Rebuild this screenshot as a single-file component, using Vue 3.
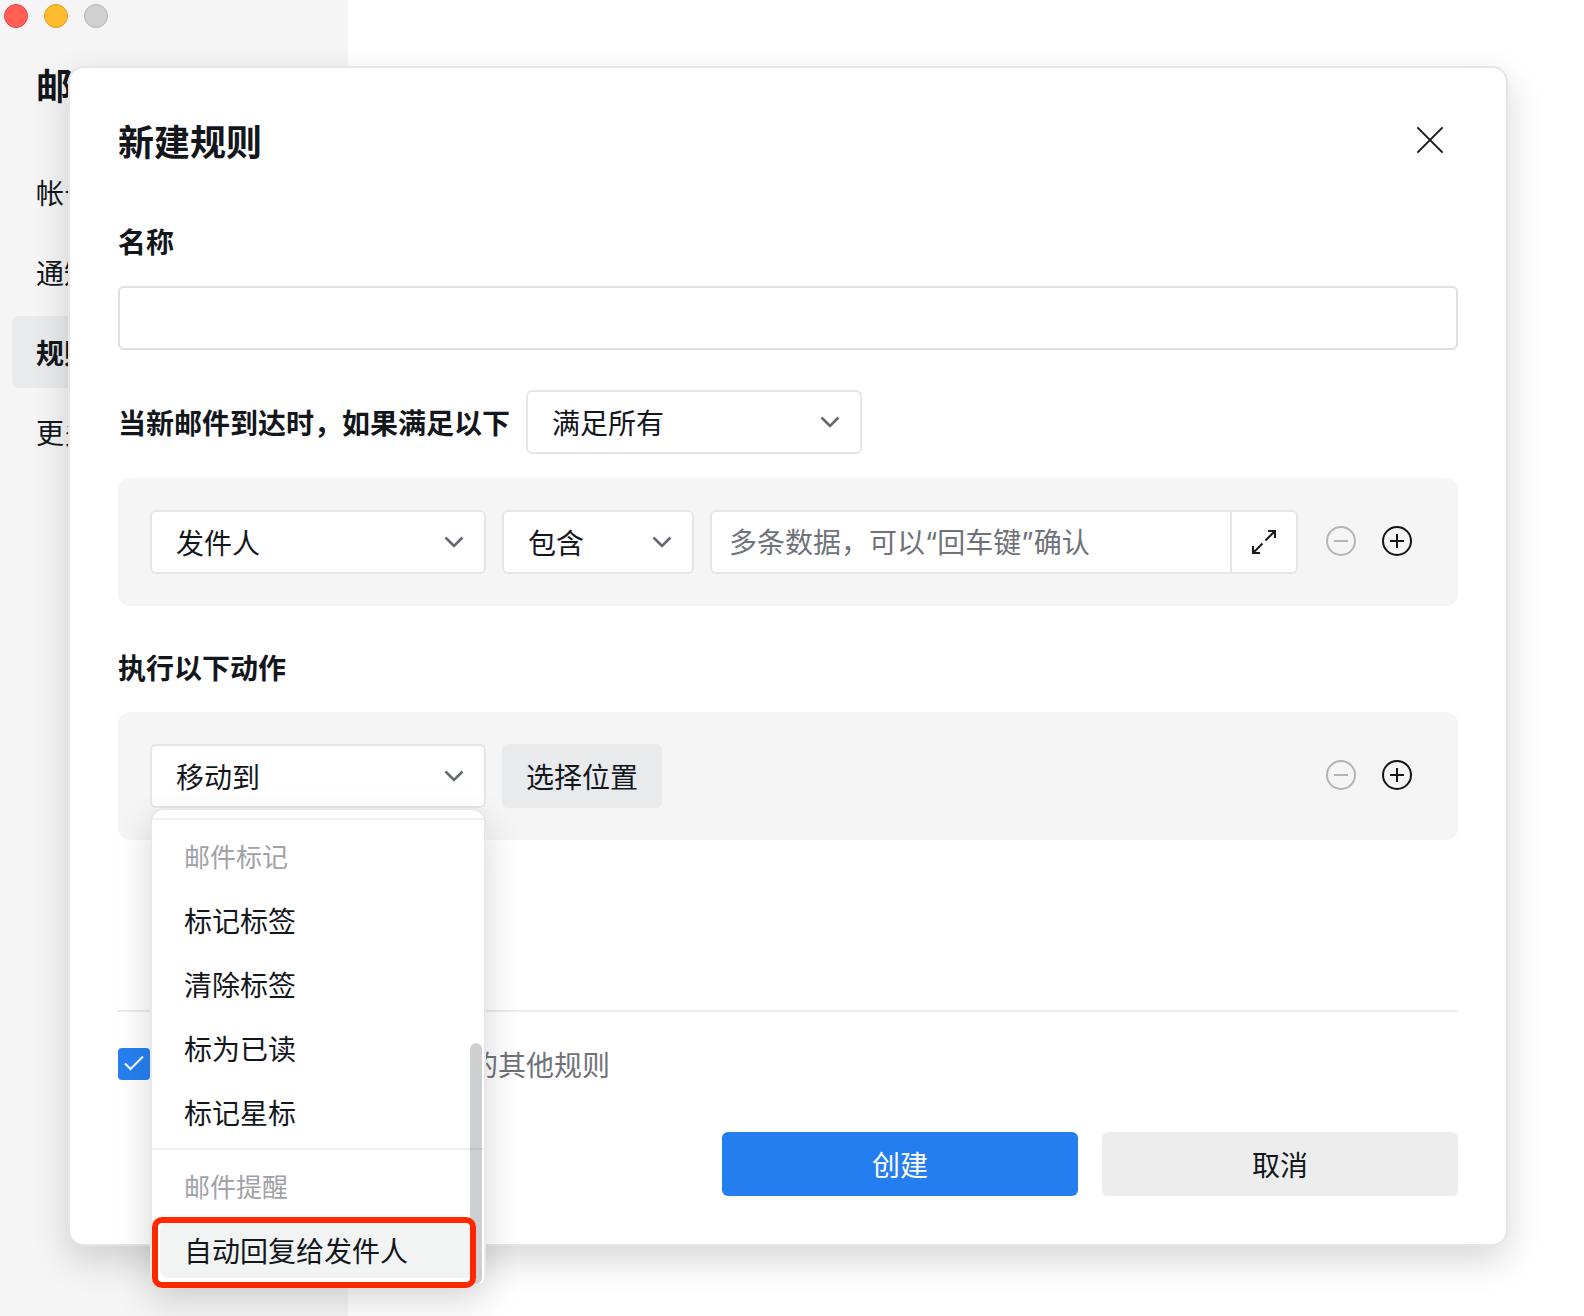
<script setup>
import { ref } from 'vue'

const navItems = ['帐号', '通知', '规则', '更多']
const activeNav = ref('规则')

const ruleName = ref('')
const matchMode = ref('满足所有')
const field = ref('发件人')
const operator = ref('包含')
const action = ref('移动到')
const stopOthers = ref(true)

const actionGroups = [
  { title: '邮件标记', items: ['标记标签', '清除标签', '标为已读', '标记星标'] },
  { title: '邮件提醒', items: ['自动回复给发件人'] },
]
const hovered = '自动回复给发件人'
</script>

<template>
  <div class="window">
    <aside class="sidebar">
      <div class="lights">
        <span class="light red"></span>
        <span class="light yellow"></span>
        <span class="light gray"></span>
      </div>
      <h1 class="side-title">邮箱设置</h1>
      <nav class="nav">
        <a
          v-for="item in navItems"
          :key="item"
          href="#"
          class="nav-item"
          :class="{ active: item === activeNav }"
          @click.prevent="activeNav = item"
        >{{ item }}</a>
      </nav>
    </aside>

    <section class="dialog" role="dialog" aria-labelledby="dialog-title">
      <header class="dialog-head">
        <h2 id="dialog-title" class="dialog-title">新建规则</h2>
        <button type="button" class="icon-btn close" aria-label="关闭">
          <svg width="30" height="30" viewBox="0 0 30 30" fill="none" stroke="#1a1a1a" stroke-width="2">
            <path d="M2.4 2.4 27.6 27.6M27.6 2.4 2.4 27.6" />
          </svg>
        </button>
      </header>

      <label class="label" for="rule-name">名称</label>
      <input id="rule-name" v-model="ruleName" class="text-input" type="text" />

      <div class="match-row">
        <label class="label inline" for="match-mode">当新邮件到达时，如果满足以下</label>
        <div class="select wide">
          <select id="match-mode" v-model="matchMode">
            <option>满足所有</option>
          </select>
          <svg class="chevron" width="20" height="12" viewBox="0 0 20 12"><path d="M1.5 1.5 10 10 18.5 1.5" /></svg>
        </div>
      </div>

      <div class="panel">
        <div class="select wide">
          <select v-model="field" aria-label="条件字段">
            <option>发件人</option>
          </select>
          <svg class="chevron" width="20" height="12" viewBox="0 0 20 12"><path d="M1.5 1.5 10 10 18.5 1.5" /></svg>
        </div>
        <div class="select narrow">
          <select v-model="operator" aria-label="条件关系">
            <option>包含</option>
          </select>
          <svg class="chevron" width="20" height="12" viewBox="0 0 20 12"><path d="M1.5 1.5 10 10 18.5 1.5" /></svg>
        </div>
        <div class="value-box">
          <input type="text" aria-label="条件内容" placeholder="多条数据，可以“回车键”确认" />
          <button type="button" class="expand" aria-label="展开">
            <svg width="26" height="26" viewBox="0 0 26 26" fill="none" stroke="#1a1a1a" stroke-width="2">
              <path d="M17 2h7v7M24 2 14.5 11.5M2 17v7h7M2 24l9.5-9.5" />
            </svg>
          </button>
        </div>
        <div class="row-actions">
          <button type="button" class="icon-btn" aria-label="删除条件" disabled>
            <svg width="32" height="32" viewBox="0 0 32 32" fill="none" stroke="#b4b4b4" stroke-width="2">
              <circle cx="16" cy="16" r="14" /><path d="M9 16h14" />
            </svg>
          </button>
          <button type="button" class="icon-btn" aria-label="添加条件">
            <svg width="32" height="32" viewBox="0 0 32 32" fill="none" stroke="#141414" stroke-width="2">
              <circle cx="16" cy="16" r="14" /><path d="M9 16h14M16 9v14" />
            </svg>
          </button>
        </div>
      </div>

      <h3 class="label section">执行以下动作</h3>

      <div class="panel">
        <div class="select wide">
          <select v-model="action" aria-label="动作">
            <option>移动到</option>
          </select>
          <svg class="chevron" width="20" height="12" viewBox="0 0 20 12"><path d="M1.5 1.5 10 10 18.5 1.5" /></svg>
          <div class="menu" role="listbox" aria-label="动作">
            <div v-for="group in actionGroups" :key="group.title" class="menu-group" role="group">
              <div class="menu-title">{{ group.title }}</div>
              <button
                v-for="item in group.items"
                :key="item"
                type="button"
                role="option"
                class="menu-item"
                :class="{ hovered: item === hovered }"
              >{{ item }}</button>
            </div>
            <div class="scroll-thumb"></div>
            <div class="callout"></div>
          </div>
        </div>
        <button type="button" class="pick">选择位置</button>
        <div class="row-actions">
          <button type="button" class="icon-btn" aria-label="删除动作" disabled>
            <svg width="32" height="32" viewBox="0 0 32 32" fill="none" stroke="#b4b4b4" stroke-width="2">
              <circle cx="16" cy="16" r="14" /><path d="M9 16h14" />
            </svg>
          </button>
          <button type="button" class="icon-btn" aria-label="添加动作">
            <svg width="32" height="32" viewBox="0 0 32 32" fill="none" stroke="#141414" stroke-width="2">
              <circle cx="16" cy="16" r="14" /><path d="M9 16h14M16 9v14" />
            </svg>
          </button>
        </div>
      </div>

      <footer class="dialog-foot">
        <label class="check">
          <span class="check-box">
            <input v-model="stopOthers" type="checkbox" />
            <svg width="32" height="32" viewBox="0 0 32 32" fill="none" stroke="#fff" stroke-width="2">
              <path d="M7 15.5 12.5 21 25 8.5" />
            </svg>
          </span>
          <span>命中规则后不再执行后续的其他规则</span>
        </label>
        <div class="buttons">
          <button type="button" class="btn primary">创建</button>
          <button type="button" class="btn">取消</button>
        </div>
      </footer>
    </section>
  </div>
</template>

<style>
body {
  margin: 0;
  background: #fff;
}
</style>

<style scoped>
.window {
  position: relative;
  display: flex;
  min-height: 100vh;
  overflow: hidden;
  color: #13171c;
  font-family: "Noto Sans CJK SC", sans-serif;
  font-size: 28px;
  line-height: 42px;
}
.window * {
  box-sizing: border-box;
}
button,
input,
select {
  margin: 0;
  padding: 0;
  border: 0;
  color: inherit;
  font: inherit;
  background: none;
}

.sidebar {
  width: 348px;
  padding: 4px 12px;
  background: #f5f5f5;
}
.lights {
  display: flex;
  gap: 16px;
  margin-left: -8px;
}
.light {
  width: 24px;
  height: 24px;
  border: 1px solid;
  border-radius: 50%;
}
.red {
  background: #ff5f57;
  border-color: #e2463f;
}
.yellow {
  background: #febc2e;
  border-color: #dfa023;
}
.gray {
  background: #d0d0d0;
  border-color: #b4b4b4;
}
.side-title {
  margin: 32px 0 48px;
  padding: 0 24px;
  font-size: 36px;
  font-weight: 700;
  line-height: 48px;
}
.nav {
  display: flex;
  flex-direction: column;
  gap: 8px;
}
.nav-item {
  padding: 0 24px;
  border-radius: 8px;
  color: inherit;
  line-height: 72px;
  text-decoration: none;
}
.nav-item.active {
  background: #e8eaec;
  font-weight: 700;
}

.dialog {
  position: absolute;
  top: 66px;
  right: 76px;
  left: 68px;
  padding: 48px;
  border: 2px solid #e6e6e6;
  border-radius: 16px;
  background: #fff;
  box-shadow: 0 14px 36px rgba(0, 0, 0, 0.16);
}
.dialog-head {
  display: flex;
  align-items: center;
  justify-content: space-between;
  margin-bottom: 56px;
}
.dialog-title {
  margin: 0;
  font-size: 36px;
  font-weight: 700;
  line-height: 48px;
}
.icon-btn {
  display: flex;
}
.close {
  margin-right: 13px;
}
.label {
  display: block;
  margin: 0 0 24px;
  font-size: 28px;
  font-weight: 700;
}
.label.inline {
  margin: 0;
}
.label.section {
  margin-top: 40px;
}
.text-input {
  display: block;
  width: 100%;
  height: 64px;
  padding: 0 24px;
  border: 2px solid #dce0e6;
  border-radius: 6px;
}
.match-row {
  display: flex;
  align-items: center;
  gap: 16px;
  margin: 40px 0 24px;
}
.select {
  position: relative;
  display: grid;
  align-items: center;
  flex: none;
}
.wide {
  width: 336px;
}
.narrow {
  width: 192px;
}
.select select {
  grid-area: 1 / 1;
  width: 100%;
  height: 64px;
  padding: 0 24px;
  border: 2px solid #e6e6e6;
  border-radius: 6px;
  background: #fff;
  appearance: none;
}
.chevron {
  grid-area: 1 / 1;
  justify-self: end;
  margin-right: 22px;
  fill: none;
  stroke: #646a70;
  stroke-width: 2.6;
  pointer-events: none;
}
.panel {
  display: flex;
  align-items: center;
  gap: 16px;
  padding: 32px;
  border-radius: 12px;
  background: #f5f5f5;
}
.value-box {
  display: flex;
  flex: 1;
  height: 64px;
  border: 2px solid #e6e6e6;
  border-radius: 6px;
  background: #fff;
}
.value-box input {
  flex: 1;
  min-width: 0;
  padding: 2px 0 0 17px;
  font-family: Inter, "Noto Sans CJK SC", sans-serif;
}
.value-box input::placeholder {
  color: #6f7379;
  opacity: 1;
}
.expand {
  display: grid;
  place-items: center;
  width: 66px;
  border-left: 2px solid #e6e6e6;
}
.row-actions {
  display: flex;
  gap: 24px;
  margin: 0 13px 0 auto;
}
.panel .row-actions {
  padding: 0 0 2px 11px;
}
.pick {
  width: 160px;
  height: 64px;
  border-radius: 6px;
  background: #e8eaec;
}

.menu {
  position: absolute;
  top: 100%;
  left: 0;
  z-index: 2;
  width: 100%;
  padding-top: 8px;
  border: 2px solid #e6e8e9;
  border-radius: 14px 14px 8px 8px;
  background: #fff;
  box-shadow: 0 14px 36px rgba(0, 0, 0, 0.16);
}
.menu-group {
  display: flex;
  flex-direction: column;
  padding: 4px 0;
  border-top: 2px solid #eeeff0;
}
.menu-group:nth-child(2) {
  padding-bottom: 2px;
}
.menu-title {
  padding: 0 32px;
  color: #9fa2a6;
  font-size: 26px;
  line-height: 64px;
}
.menu-item {
  margin: 4px 8px;
  padding: 0 24px;
  border-radius: 8px;
  text-align: left;
  line-height: 56px;
}
.menu-item.hovered {
  background: #f2f4f4;
}
.scroll-thumb {
  position: absolute;
  right: 2px;
  bottom: 0;
  width: 12px;
  height: 241px;
  border-radius: 6px;
  background: rgba(20, 26, 32, 0.21);
}
.callout {
  position: absolute;
  right: 8px;
  bottom: -4px;
  left: 0;
  height: 71px;
  border: 6px solid #ff2600;
  border-radius: 10px;
  pointer-events: none;
}

.dialog-foot {
  margin-top: 170px;
  padding-top: 36px;
  border-top: 2px solid #ebebeb;
}
.check {
  display: flex;
  align-items: center;
  gap: 12px;
  color: #6f7379;
  line-height: 32px;
}
.check-box {
  display: grid;
}
.check-box input {
  grid-area: 1 / 1;
  width: 32px;
  height: 32px;
  border-radius: 4px;
  background: #2680f0;
  appearance: none;
}
.check-box svg {
  grid-area: 1 / 1;
  pointer-events: none;
}
.buttons {
  display: flex;
  justify-content: flex-end;
  gap: 24px;
  margin-top: 52px;
}
.btn {
  width: 356px;
  height: 64px;
  border-radius: 6px;
  background: #ededed;
}
.primary {
  background: #257ef0;
  color: #fff;
}
</style>
